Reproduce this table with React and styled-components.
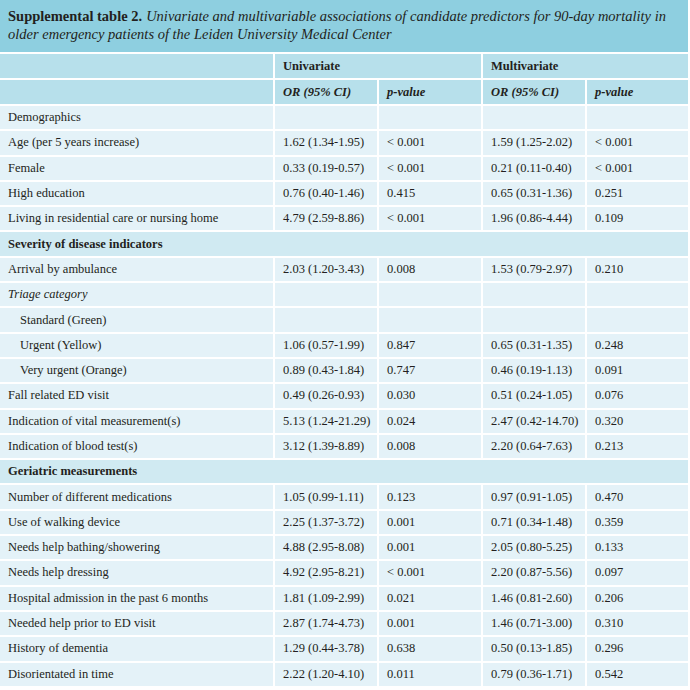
import React from 'react';
import styled, { createGlobalStyle } from 'styled-components';

const GlobalStyle = createGlobalStyle`
  body {
    margin: 0;
    background: #ffffff;
    font-family: "Liberation Serif", "DejaVu Serif", serif;
    color: #231f20;
  }
`;

const Wrapper = styled.div`
  width: 688px;
`;

const Caption = styled.div`
  background: #8ecfe0;
  padding: 7px 8px 0 8px;
  height: 45px;
  font-size: 14.5px;
  line-height: 18px;
  border-bottom: 2px solid #ffffff;
`;

const CaptionLabel = styled.b`
  font-weight: bold;
  margin-right: 4px;
`;

const CaptionText = styled.i`
  font-style: italic;
`;

const Table = styled.table`
  width: 688px;
  border-collapse: collapse;
  table-layout: fixed;
  font-size: 12.5px;
`;

const HeadCell = styled.th`
  background: #b7e0eb;
  height: 24px;
  padding: 0 8px;
  text-align: left;
  font-weight: bold;
  font-style: ${p => (p.$italic ? 'italic' : 'normal')};
  border: 2px solid #ffffff;
  border-top: 0;
  border-right: 0;
  &:first-child { border-left: 0; }
`;

const Cell = styled.td`
  background: ${p => (p.$section ? '#d0eaf2' : '#e4f2f8')};
  height: 23.3px;
  padding: 0 8px 0 ${p => (p.$indent ? 20 : 8)}px;
  font-weight: ${p => (p.$section ? 'bold' : 'normal')};
  font-style: ${p => (p.$italic ? 'italic' : 'normal')};
  white-space: nowrap;
  border-bottom: 2px solid #ffffff;
  border-left: 2px solid #ffffff;
  &:first-child { border-left: 0; }
`;

const rows = [
  { label: 'Demographics', vals: ['', '', '', ''] },
  { label: 'Age (per 5 years increase)', vals: ['1.62 (1.34-1.95)', '< 0.001', '1.59 (1.25-2.02)', '< 0.001'] },
  { label: 'Female', vals: ['0.33 (0.19-0.57)', '< 0.001', '0.21 (0.11-0.40)', '< 0.001'] },
  { label: 'High education', vals: ['0.76 (0.40-1.46)', '0.415', '0.65 (0.31-1.36)', '0.251'] },
  { label: 'Living in residential care or nursing home', vals: ['4.79 (2.59-8.86)', '< 0.001', '1.96 (0.86-4.44)', '0.109'] },
  { label: 'Severity of disease indicators', section: true },
  { label: 'Arrival by ambulance', vals: ['2.03 (1.20-3.43)', '0.008', '1.53 (0.79-2.97)', '0.210'] },
  { label: 'Triage category', italic: true, vals: ['', '', '', ''] },
  { label: 'Standard (Green)', indent: true, vals: ['', '', '', ''] },
  { label: 'Urgent (Yellow)', indent: true, vals: ['1.06 (0.57-1.99)', '0.847', '0.65 (0.31-1.35)', '0.248'] },
  { label: 'Very urgent (Orange)', indent: true, vals: ['0.89 (0.43-1.84)', '0.747', '0.46 (0.19-1.13)', '0.091'] },
  { label: 'Fall related ED visit', vals: ['0.49 (0.26-0.93)', '0.030', '0.51 (0.24-1.05)', '0.076'] },
  { label: 'Indication of vital measurement(s)', vals: ['5.13 (1.24-21.29)', '0.024', '2.47 (0.42-14.70)', '0.320'] },
  { label: 'Indication of blood test(s)', vals: ['3.12 (1.39-8.89)', '0.008', '2.20 (0.64-7.63)', '0.213'] },
  { label: 'Geriatric measurements', section: true },
  { label: 'Number of different medications', vals: ['1.05 (0.99-1.11)', '0.123', '0.97 (0.91-1.05)', '0.470'] },
  { label: 'Use of walking device', vals: ['2.25 (1.37-3.72)', '0.001', '0.71 (0.34-1.48)', '0.359'] },
  { label: 'Needs help bathing/showering', vals: ['4.88 (2.95-8.08)', '0.001', '2.05 (0.80-5.25)', '0.133'] },
  { label: 'Needs help dressing', vals: ['4.92 (2.95-8.21)', '< 0.001', '2.20 (0.87-5.56)', '0.097'] },
  { label: 'Hospital admission in the past 6 months', vals: ['1.81 (1.09-2.99)', '0.021', '1.46 (0.81-2.60)', '0.206'] },
  { label: 'Needed help prior to ED visit', vals: ['2.87 (1.74-4.73)', '0.001', '1.46 (0.71-3.00)', '0.310'] },
  { label: 'History of dementia', vals: ['1.29 (0.44-3.78)', '0.638', '0.50 (0.13-1.85)', '0.296'] },
  { label: 'Disorientated in time', vals: ['2.22 (1.20-4.10)', '0.011', '0.79 (0.36-1.71)', '0.542'] },
];

export default function App() {
  return (
    <Wrapper>
      <GlobalStyle />
      <Caption>
        <CaptionLabel>Supplemental table 2.</CaptionLabel>
        <CaptionText>
          Univariate and multivariable associations of candidate predictors for 90-day mortality in
          older emergency patients of the Leiden University Medical Center
        </CaptionText>
      </Caption>
      <Table>
        <colgroup>
          <col style={{ width: 274 }} />
          <col style={{ width: 104 }} />
          <col style={{ width: 104 }} />
          <col style={{ width: 104 }} />
          <col style={{ width: 102 }} />
        </colgroup>
        <thead>
          <tr>
            <HeadCell />
            <HeadCell colSpan={2}>Univariate</HeadCell>
            <HeadCell colSpan={2}>Multivariate</HeadCell>
          </tr>
          <tr>
            <HeadCell />
            <HeadCell $italic>OR (95% CI)</HeadCell>
            <HeadCell $italic>p-value</HeadCell>
            <HeadCell $italic>OR (95% CI)</HeadCell>
            <HeadCell $italic>p-value</HeadCell>
          </tr>
        </thead>
        <tbody>
          {rows.map(r =>
            r.section ? (
              <tr key={r.label}>
                <Cell $section colSpan={5}>{r.label}</Cell>
              </tr>
            ) : (
              <tr key={r.label}>
                <Cell $italic={r.italic} $indent={r.indent}>{r.label}</Cell>
                {r.vals.map((v, i) => (
                  <Cell key={i}>{v}</Cell>
                ))}
              </tr>
            )
          )}
        </tbody>
      </Table>
    </Wrapper>
  );
}
